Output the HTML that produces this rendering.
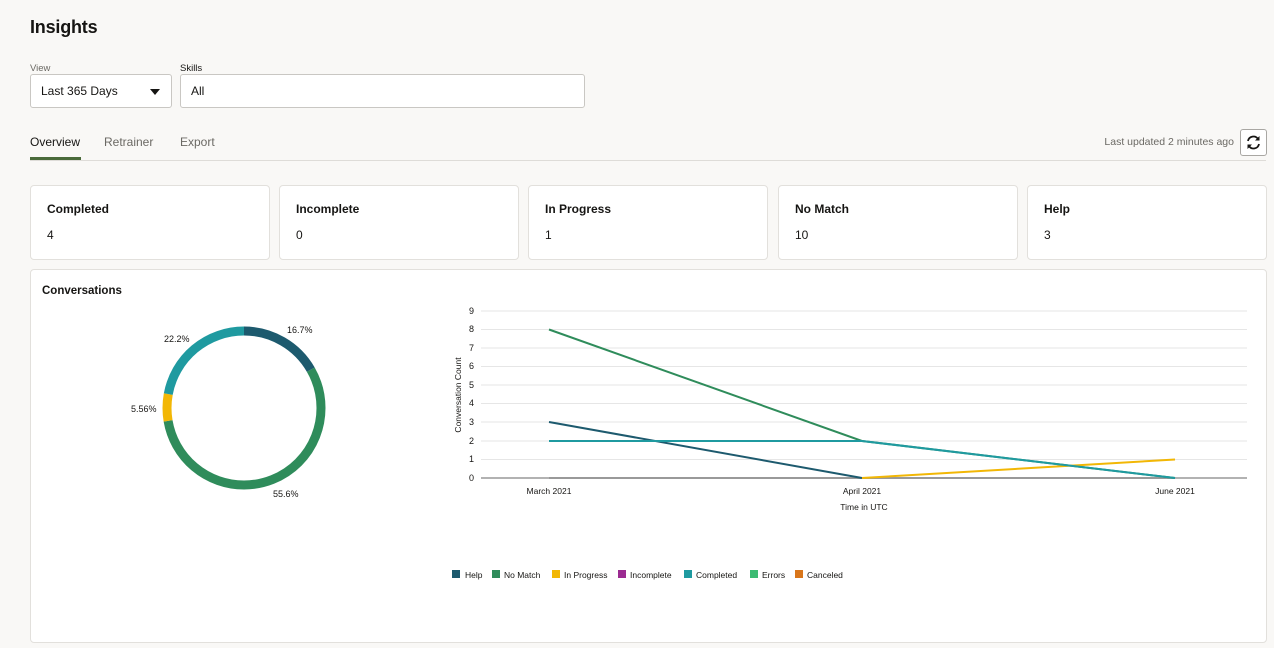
<!DOCTYPE html>
<html><head><meta charset="utf-8"><style>
*{box-sizing:border-box;margin:0;padding:0}
body{width:1274px;height:648px;background:#f9f8f6;font-family:"Liberation Sans",sans-serif;color:#161513;position:relative;overflow:hidden}
.abs{position:absolute}
h1{position:absolute;left:30px;top:17px;font-size:18px;font-weight:bold;letter-spacing:-0.2px}
.lbl{font-size:9.5px;color:#6b6964}
.box{position:absolute;background:#fff;border:1px solid #c9c7c3;border-radius:3px;font-size:12px;padding-left:10px;display:flex;align-items:center}
.tab{position:absolute;top:135px;font-size:12px;color:#6b6964}
.card{position:absolute;top:185px;width:240px;height:75px;background:#fff;border:1px solid #e2e0dc;border-radius:4px}
.card b{position:absolute;left:16px;top:16px;font-size:12px}
.card span{position:absolute;left:16px;top:42px;font-size:12px}
</style></head><body>
<h1>Insights</h1>
<div class="abs lbl" style="left:30px;top:63px">View</div>
<div class="abs" style="left:180px;top:63px;font-size:9.5px">Skills</div>
<div class="box" style="left:30px;top:74px;width:142px;height:34px">Last 365 Days<span style="position:absolute;right:11px;top:14px;border-left:5px solid transparent;border-right:5px solid transparent;border-top:6px solid #161513"></span></div>
<div class="box" style="left:180px;top:74px;width:405px;height:34px">All</div>
<div class="tab" style="left:30px;color:#161513">Overview</div>
<div class="tab" style="left:104px">Retrainer</div>
<div class="tab" style="left:180px">Export</div>
<div class="abs" style="left:30px;top:157px;width:51px;height:3px;background:#4a6a3a"></div>
<div class="abs" style="left:30px;top:160px;width:1236px;height:1px;background:#dedcd8"></div>
<div class="abs" style="right:40px;top:136px;font-size:10.5px;color:#6b6964">Last updated 2 minutes ago</div>
<div class="abs" style="left:1240px;top:129px;width:27px;height:27px;border:1px solid #a9a7a3;border-radius:3px;background:#fff">
<svg width="25" height="25" viewBox="0 0 25 25"><g fill="none" stroke="#161513" stroke-width="1.8"><path d="M7 11a5.5 5.5 0 0 1 10-2"/><path d="M18 14a5.5 5.5 0 0 1-10 2"/></g><path d="M18.5 6v4.5h-4.5z" fill="#161513"/><path d="M6.5 19v-4.5h4.5z" fill="#161513"/></svg></div>
<div class="card" style="left:30px"><b>Completed</b><span>4</span></div>
<div class="card" style="left:279px"><b>Incomplete</b><span>0</span></div>
<div class="card" style="left:528px"><b>In Progress</b><span>1</span></div>
<div class="card" style="left:778px"><b>No Match</b><span>10</span></div>
<div class="card" style="left:1027px"><b>Help</b><span>3</span></div>
<div class="abs" style="left:30px;top:269px;width:1237px;height:374px;background:#fff;border:1px solid #e2e0dc;border-radius:4px"></div>
<div class="abs" style="left:42px;top:285px;font-size:11.5px;font-weight:bold">Conversations</div>
<svg class="abs" style="left:0;top:0" width="1274" height="648">
<g transform="rotate(-90 244 408)" fill="none" stroke-width="9">
<circle cx="244" cy="408" r="77" stroke="#1d5a6e" stroke-dasharray="80.8 483.8" stroke-dashoffset="0"/>
<circle cx="244" cy="408" r="77" stroke="#2f8c5b" stroke-dasharray="269 483.8" stroke-dashoffset="-80.8"/>
<circle cx="244" cy="408" r="77" stroke="#f2b705" stroke-dasharray="26.9 483.8" stroke-dashoffset="-349.8"/>
<circle cx="244" cy="408" r="77" stroke="#1f9aa0" stroke-dasharray="107.4 483.8" stroke-dashoffset="-376.7"/>
</g>
<g font-size="9" fill="#161513" font-family="Liberation Sans">
<text x="287" y="333">16.7%</text><text x="164" y="342">22.2%</text><text x="131" y="412">5.56%</text><text x="273" y="497">55.6%</text>
</g>
<g stroke="#e6e6e6" stroke-width="1">
<line x1="481" x2="1247" y1="311" y2="311"/><line x1="481" x2="1247" y1="329.5" y2="329.5"/><line x1="481" x2="1247" y1="348" y2="348"/><line x1="481" x2="1247" y1="366.5" y2="366.5"/><line x1="481" x2="1247" y1="385" y2="385"/><line x1="481" x2="1247" y1="403.5" y2="403.5"/><line x1="481" x2="1247" y1="422" y2="422"/><line x1="481" x2="1247" y1="441" y2="441"/><line x1="481" x2="1247" y1="459.5" y2="459.5"/>
</g>
<line x1="481" x2="1247" y1="478" y2="478" stroke="#999" stroke-width="1.5"/>
<g font-size="9" fill="#161513" text-anchor="end" font-family="Liberation Sans">
<text x="474" y="314">9</text><text x="474" y="332">8</text><text x="474" y="351">7</text><text x="474" y="369">6</text><text x="474" y="388">5</text><text x="474" y="406">4</text><text x="474" y="425">3</text><text x="474" y="444">2</text><text x="474" y="462">1</text><text x="474" y="481">0</text>
</g>
<text transform="translate(461 395) rotate(-90)" font-size="8.5" text-anchor="middle" fill="#161513">Conversation Count</text>
<g font-size="8.5" fill="#161513" text-anchor="middle">
<text x="549" y="494">March 2021</text><text x="862" y="494">April 2021</text><text x="1175" y="494">June 2021</text><text x="864" y="510">Time in UTC</text>
</g>
<g fill="none" stroke-width="2">
<polyline points="549,478 1175,478" stroke="#999"/>
<polyline points="549,329.5 862,441 1175,478" stroke="#2f8c5b"/>
<polyline points="549,422 862,478" stroke="#1d5a6e"/>
<polyline points="862,478 1175,459.5" stroke="#f2b705"/>
<polyline points="549,441 862,441 1175,478" stroke="#1f9aa0"/>
</g>
<g font-size="8.5" fill="#161513">
<rect x="452" y="570" width="8" height="8" fill="#1d5a6e"/><text x="465" y="578">Help</text>
<rect x="492" y="570" width="8" height="8" fill="#2f8c5b"/><text x="504" y="578">No Match</text>
<rect x="552" y="570" width="8" height="8" fill="#f2b705"/><text x="564" y="578">In Progress</text>
<rect x="618" y="570" width="8" height="8" fill="#9b2b91"/><text x="630" y="578">Incomplete</text>
<rect x="684" y="570" width="8" height="8" fill="#1f9aa0"/><text x="696" y="578">Completed</text>
<rect x="750" y="570" width="8" height="8" fill="#3dbb73"/><text x="762" y="578">Errors</text>
<rect x="795" y="570" width="8" height="8" fill="#d9761a"/><text x="807" y="578">Canceled</text>
</g>
</svg>
</body></html>
